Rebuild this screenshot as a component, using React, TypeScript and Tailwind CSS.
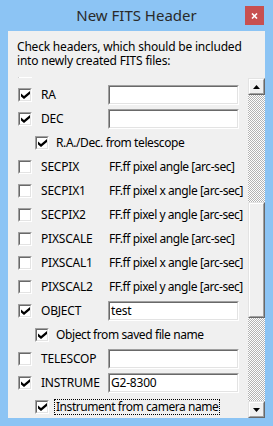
import React from "react";

function Check({ checked }: { checked: boolean }) {
  return (
    <span className="flex h-[14px] w-[14px] shrink-0 border border-t-[#a0a0a0] border-l-[#a0a0a0] border-b-white border-r-white">
      <span className="flex flex-1 items-center justify-center border border-t-[#696969] border-l-[#696969] border-b-[#e3e3e3] border-r-[#e3e3e3] bg-white">
        {checked && (
          <svg width="9" height="8" viewBox="0 0 9 8">
            <polygon points="0,2.5 3,5 9,0 9,3 3,8 0,5.5" fill="#000" />
          </svg>
        )}
      </span>
    </span>
  );
}

function Field({ value }: { value?: string }) {
  return (
    <span className="flex h-[20px] w-[131px] shrink-0 border border-t-[#a0a0a0] border-l-[#a0a0a0] border-b-white border-r-white">
      <span className="flex flex-1 items-center border border-t-[#696969] border-l-[#696969] border-b-[#e3e3e3] border-r-[#e3e3e3] bg-white pl-[1px] text-black">
        {value}
      </span>
    </span>
  );
}

function Row({
  checked,
  name,
  field,
  value,
  desc,
}: {
  checked: boolean;
  name: string;
  field?: boolean;
  value?: string;
  desc?: string;
}) {
  return (
    <div className="flex h-[24px] shrink-0 items-center pl-[10px]">
      <Check checked={checked} />
      <span className="ml-[9px] w-[67px] shrink-0">{name}</span>
      {field ? (
        <Field value={value} />
      ) : (
        <span className="ml-[1px] whitespace-nowrap tracking-[-0.45px]">{desc}</span>
      )}
    </div>
  );
}

function SubRow({ label, focus }: { label: string; focus?: boolean }) {
  return (
    <div className="flex h-[24px] shrink-0 items-center pl-[27px]">
      <Check checked={true} />
      {focus ? (
        <span className="ml-[5px] whitespace-nowrap border border-dotted border-black px-[1px] leading-[14px] tracking-[-0.45px]">
          {label}
        </span>
      ) : (
        <span className="ml-[7px] whitespace-nowrap tracking-[-0.4px]">{label}</span>
      )}
    </div>
  );
}

function ScrollButton({ up }: { up: boolean }) {
  return (
    <div className="flex h-[17px] w-[17px] shrink-0 border border-t-[#e3e3e3] border-l-[#e3e3e3] border-b-[#696969] border-r-[#696969]">
      <div className="flex flex-1 items-center justify-center border border-t-white border-l-white border-b-[#a0a0a0] border-r-[#a0a0a0] bg-[#f0f0f0]">
        <svg width="7" height="4" viewBox="0 0 7 4">
          {up ? <polygon points="3.5,0 7,4 0,4" fill="#000" /> : <polygon points="0,0 7,0 3.5,4" fill="#000" />}
        </svg>
      </div>
    </div>
  );
}

export default function App() {
  return (
    <div className="flex h-[426px] w-[273px] flex-col bg-[#8cc4f4] font-['Segoe_UI','Noto_Sans',sans-serif] text-[12px] tracking-[-0.2px] text-black">
      <div className="relative flex h-[31px] shrink-0 items-center justify-center">
        <span className="text-[15px] tracking-normal text-[#2a2a2a]">New FITS Header</span>
        <div className="absolute right-[9px] top-[6px] flex h-[19px] w-[19px] items-center justify-center bg-[#c75050]">
          <svg width="7" height="6" viewBox="0 0 7 6">
            <path d="M1 0.5 L6 5.5 M6 0.5 L1 5.5" stroke="#fff" strokeWidth="1.6" />
          </svg>
        </div>
      </div>
      <div className="mx-[8px] mb-[8px] flex flex-1 flex-col overflow-hidden bg-[#f0f0f0]">
        <p className="pl-[9px] pt-[9px] leading-[14px]">
          Check headers, which should be included
          <br />
          into newly created FITS files:
        </p>
        <div className="mt-[9px] flex flex-1 overflow-hidden">
          <div className="w-[240px] overflow-hidden">
            <div className="-mt-[18px] flex flex-col">
              <Row checked={false} name="" field={false} desc="" />
              <Row checked={true} name="RA" field />
              <Row checked={true} name="DEC" field />
              <SubRow label="R.A./Dec. from telescope" />
              <Row checked={false} name="SECPIX" desc="FF.ff pixel angle [arc-sec]" />
              <Row checked={false} name="SECPIX1" desc="FF.ff pixel x angle [arc-sec]" />
              <Row checked={false} name="SECPIX2" desc="FF.ff pixel y angle [arc-sec]" />
              <Row checked={false} name="PIXSCALE" desc="FF.ff pixel angle [arc-sec]" />
              <Row checked={false} name="PIXSCAL1" desc="FF.ff pixel x angle [arc-sec]" />
              <Row checked={false} name="PIXSCAL2" desc="FF.ff pixel y angle [arc-sec]" />
              <Row checked={true} name="OBJECT" field value="test" />
              <SubRow label="Object from saved file name" />
              <Row checked={false} name="TELESCOP" field />
              <Row checked={true} name="INSTRUME" field value="G2-8300" />
              <SubRow label="Instrument from camera name" focus />
            </div>
          </div>
          <div className="flex w-[17px] shrink-0 flex-col pt-[1px]">
            <ScrollButton up />
            <div className="h-[107px] shrink-0 bg-[image:repeating-conic-gradient(#b4b4b4_0%_25%,#ffffff_0%_50%)] bg-[length:2px_2px]" />
            <div className="flex h-[116px] shrink-0 border border-t-[#e3e3e3] border-l-[#e3e3e3] border-b-[#696969] border-r-[#696969]">
              <div className="flex-1 border border-t-white border-l-white border-b-[#a0a0a0] border-r-[#a0a0a0] bg-[#f0f0f0]" />
            </div>
            <div className="flex-1 bg-[image:repeating-conic-gradient(#b4b4b4_0%_25%,#ffffff_0%_50%)] bg-[length:2px_2px]" />
            <ScrollButton up={false} />
          </div>
        </div>
      </div>
    </div>
  );
}
